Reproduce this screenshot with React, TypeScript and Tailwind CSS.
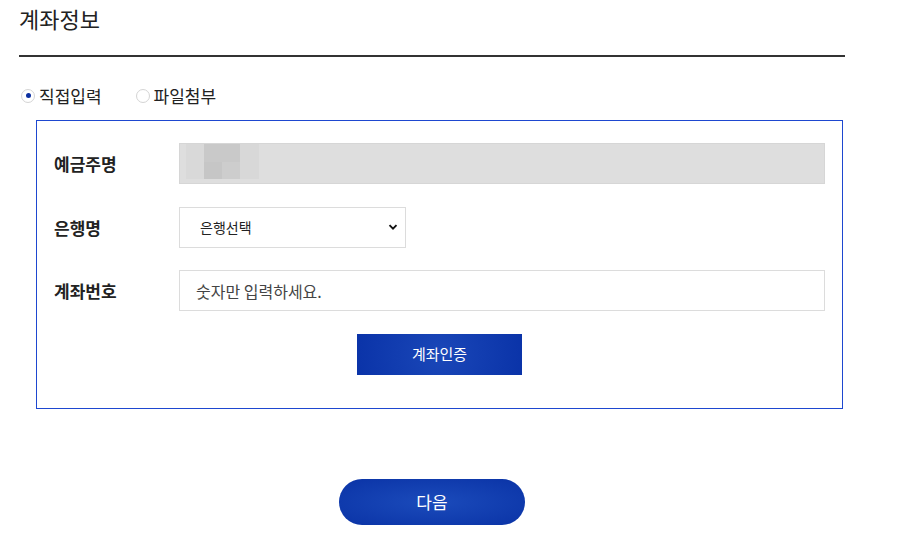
import React, { useState } from 'react'

const font = { fontFamily: '"Noto Sans CJK KR", "Noto Sans", sans-serif' }

function Radio({ checked, label, onClick }: { checked: boolean; label: string; onClick: () => void }) {
  return (
    <button type="button" onClick={onClick} className="flex items-center gap-[4px] text-[17px] text-[#222]">
      <span className="flex h-[14px] w-[14px] items-center justify-center rounded-full border border-[#d4d4d4] bg-white">
        {checked && <span className="h-[5px] w-[5px] rounded-full bg-[#0b2fa0]" />}
      </span>
      <span className="leading-none">{label}</span>
    </button>
  )
}

export default function App() {
  const [mode, setMode] = useState<'direct' | 'file'>('direct')

  return (
    <div className="min-h-[550px] w-[900px] bg-white" style={font}>
      <div className="ml-[19px] w-[826px]">
        {/* 제목 */}
        <h2 className="pt-[3px] text-[22px] leading-[30px] font-normal text-[#222]">계좌정보</h2>
        <div className="mt-[22px] h-[2px] bg-[#333]" />

        {/* 입력방식 */}
        <div className="mt-[30px] flex items-center gap-[34px] pl-[2px]">
          <Radio checked={mode === 'direct'} label="직접입력" onClick={() => setMode('direct')} />
          <Radio checked={mode === 'file'} label="파일첨부" onClick={() => setMode('file')} />
        </div>

        {/* 폼 박스 */}
        <div className="mt-[16px] ml-[17px] w-[807px] border border-[#1e48d0] pt-[22px] pr-[17px] pb-[33px] pl-[17px]">
          <div className="flex items-center">
            <span className="w-[125px] text-[17px] font-bold text-[#222]">예금주명</span>
            <div className="relative h-[41px] flex-1 border border-[#d6d6d6] bg-[#dedede]">
              <div className="absolute top-0 left-[6px] flex h-[35px]">
                <span className="h-full w-[18px] bg-[#d9d9d9]" />
                <span className="flex h-full w-[36px] flex-col">
                  <span className="h-[18px] bg-[#c9c9c9]" />
                  <span className="flex flex-1">
                    <span className="w-[18px] bg-[#c6c6c6]" />
                    <span className="flex-1 bg-[#cdcdcd]" />
                  </span>
                </span>
                <span className="h-full w-[19px] bg-[#d8d8d8]" />
              </div>
            </div>
          </div>

          <div className="mt-[23px] flex items-center">
            <span className="w-[125px] text-[17px] font-bold text-[#222]">은행명</span>
            <div className="relative h-[41px] w-[227px]">
              <select className="h-full w-full appearance-none border border-[#dcdcdc] bg-white pl-[20px] text-[14px] text-[#222] outline-none">
                <option>은행선택</option>
                <option>국민은행</option>
                <option>신한은행</option>
                <option>우리은행</option>
                <option>하나은행</option>
              </select>
              <svg className="pointer-events-none absolute top-[15px] right-[8px]" width="10" height="10" viewBox="0 0 10 10">
                <path d="M1.5 3.2 L5 6.7 L8.5 3.2" fill="none" stroke="#111" strokeWidth="1.9" />
              </svg>
            </div>
          </div>

          <div className="mt-[22px] flex items-center">
            <span className="w-[125px] text-[17px] font-bold text-[#222]">계좌번호</span>
            <input
              placeholder="숫자만 입력하세요."
              className="h-[41px] flex-1 border border-[#dcdcdc] bg-white pl-[16px] text-[16px] text-[#222] outline-none placeholder:text-[#444]"
            />
          </div>

          <div className="mt-[23px] flex justify-center">
            <button
              type="button"
              className="h-[41px] w-[165px] bg-[radial-gradient(circle,#1a47b8_0%,#0a33a8_100%)] text-[15px] text-white"
            >
              계좌인증
            </button>
          </div>
        </div>

        {/* 다음 */}
        <div className="mt-[70px] flex justify-center">
          <button
            type="button"
            className="h-[46px] w-[186px] rounded-full bg-[radial-gradient(ellipse_at_center,#1b4bbb_0%,#0a33a6_100%)] text-[17px] text-white"
          >
            다음
          </button>
        </div>
      </div>
    </div>
  )
}
